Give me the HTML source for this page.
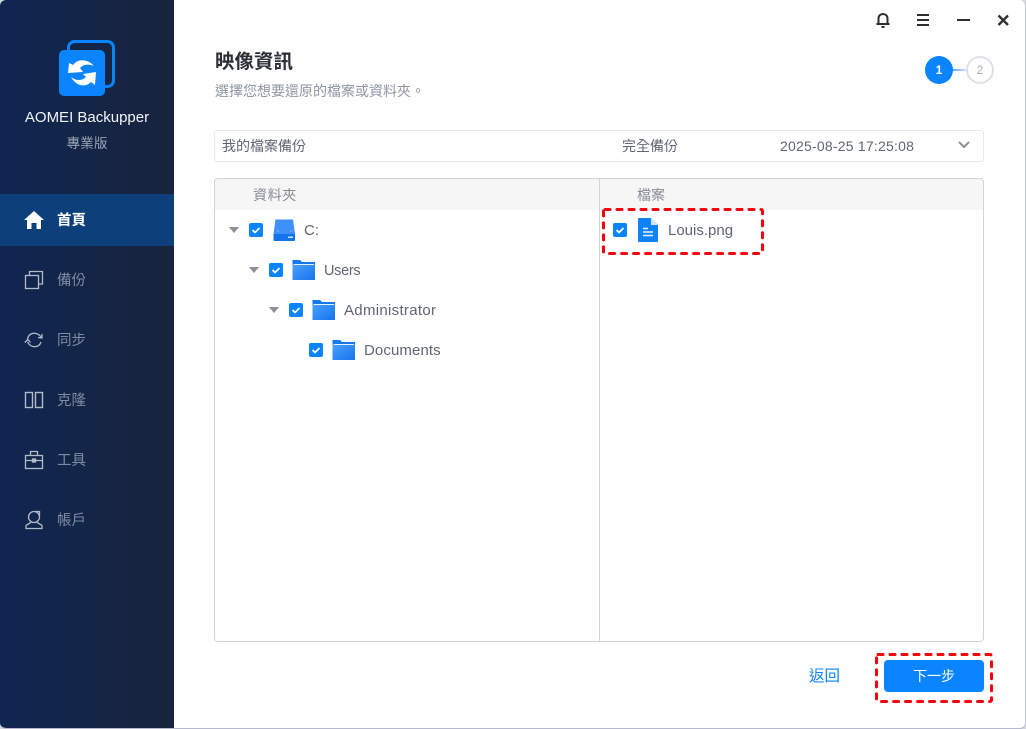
<!DOCTYPE html>
<html><head><meta charset="utf-8"><style>
*{box-sizing:border-box}
html,body{margin:0;padding:0;width:1026px;height:729px;overflow:hidden;background:#d5d6dd;font-family:"Liberation Sans","Noto Sans CJK TC",sans-serif}
.a{position:absolute;white-space:nowrap}
#win{position:absolute;left:0;top:0;width:1026px;height:729px;background:#fff;border-right:1px solid #c0c3d0;border-bottom:1px solid #b6b9cb;border-radius:6px;overflow:hidden}
#side{position:absolute;left:0;top:0;width:174px;height:729px;background:linear-gradient(90deg,#0f2651,#18243d)}
.nav{position:absolute;left:57px;font-size:14.5px;line-height:20px;color:#7f8ba0}
.t{font-size:15px;color:#5f6672;line-height:20px}
.cb{position:absolute;width:14px;height:14px;border-radius:2px;background:#0a84ff}
.cb svg{display:block}
.tri{position:absolute;width:0;height:0;border-left:5px solid transparent;border-right:5px solid transparent;border-top:6.500px solid #8a8f99}
</style></head><body>
<div id="win">
<svg width="0" height="0" style="position:absolute"><defs><linearGradient id="fg" x1="0" y1="0" x2="1" y2="1"><stop offset="0" stop-color="#49a0ff"/><stop offset="1" stop-color="#1673ec"/></linearGradient></defs></svg>
<div id="side">
<svg class="a" style="left:58px;top:39px" width="58" height="58" viewBox="0 0 58 58">
<rect x="10.500" y="2.500" width="45" height="45" rx="6" fill="none" stroke="#0a84ff" stroke-width="3"/>
<rect x="1" y="11" width="46" height="46" rx="5" fill="#0a84ff"/>
<path d="M10 34 L11 24 L15 26 C20 19 30 20 36 27 C31 25 26 25 22 29 L25 33 Z" fill="#fff"/>
<path d="M38 33 L37 46 L33 43 C27 49 18 47 13 38 C18 42 24 42 28 38 L25 35 Z" fill="#fff"/>
</svg>
<div class="a" style="left:0;width:174px;top:107px;text-align:center;font-size:15px;line-height:21px;color:#f2f4f8">AOMEI Backupper</div>
<div class="a" style="left:0;width:174px;top:133px;text-align:center;font-size:13.700px;line-height:21px;color:#9aa3b3">專業版</div>
<div class="a" style="left:0;top:194px;width:174px;height:52px;background:#0d3f7a"></div>
<svg class="a" style="left:24px;top:210px" width="20" height="19" viewBox="0 0 20 19"><path d="M10 1 L20 10 L17 10 L17 19 L12.500 19 L12.500 13 L7.500 13 L7.500 19 L3 19 L3 10 L0 10 Z" fill="#fff"/></svg>
<div class="nav" style="top:211px;color:#fff;font-weight:700">首頁</div>
<svg class="a" style="left:24px;top:270px" width="20" height="20" viewBox="0 0 20 20" fill="none" stroke="#b4bac6" stroke-width="1.300"><rect x="1.500" y="5.500" width="13" height="13"/><path d="M5.500 5 V1.500 H18.500 V14 H15"/></svg>
<div class="nav" style="top:271px">備份</div>
<svg class="a" style="left:24px;top:330px" width="20" height="20" viewBox="0 0 20 20" fill="none" stroke="#b4bac6" stroke-width="1.300"><path d="M3.500 9 C5 2 13 1.500 17 7"/><path d="M18 4 V8 L14 7.500"/><path d="M17 12 C15 18 7 18.500 3.500 12"/><path d="M0.800 12.500 L3.800 9.500 L6.500 12.500"/></svg>
<div class="nav" style="top:331px">同步</div>
<svg class="a" style="left:24px;top:390px" width="20" height="20" viewBox="0 0 20 20" fill="none" stroke="#b4bac6" stroke-width="1.400"><rect x="1.500" y="2.500" width="7" height="15"/><rect x="11.500" y="2.500" width="7" height="15"/></svg>
<div class="nav" style="top:391px">克隆</div>
<svg class="a" style="left:24px;top:450px" width="20" height="20" viewBox="0 0 20 20" fill="none" stroke="#b4bac6" stroke-width="1.300"><rect x="1.500" y="5.500" width="17" height="13"/><path d="M6.500 5 V1.500 H13.500 V5 M1.500 10.500 H18.500"/><rect x="8.500" y="9" width="3" height="3" fill="#b4bac6"/></svg>
<div class="nav" style="top:451px">工具</div>
<svg class="a" style="left:24px;top:510px" width="20" height="20" viewBox="0 0 20 20" fill="none" stroke="#b4bac6" stroke-width="1.300"><path d="M4.500 7 A5.500 5.500 0 1 1 15.500 7 A5.500 5.500 0 1 1 4.500 7 Z"/><path d="M11 1.500 H15.500 V6"/><path d="M7 12.500 L2.500 15 Q2 15.500 2 16 V18.500 H18 V16 Q18 15.500 17.500 15 L13 12.500"/></svg>
<div class="nav" style="top:511px">帳戶</div>
</div>

<svg class="a" style="left:874px;top:11px" width="18" height="18" viewBox="0 0 18 18" fill="none" stroke="#2b2f36" stroke-width="2"><path d="M2.500 13 H15.500 M4.500 13 V7.500 C4.500 1.500 13.500 1.500 13.500 7.500 V13"/><path d="M7.500 16 H10.500"/></svg>
<svg class="a" style="left:916px;top:13px" width="14" height="14" viewBox="0 0 14 14" stroke="#2b2f36" stroke-width="2"><path d="M1 2 H13 M1 7 H13 M1 12 H13"/></svg>
<svg class="a" style="left:956px;top:13px" width="15" height="14" viewBox="0 0 15 14" stroke="#2b2f36" stroke-width="2"><path d="M1 7 H14"/></svg>
<svg class="a" style="left:996px;top:13px" width="14" height="14" viewBox="0 0 14 14" stroke="#332f36" stroke-width="2.400"><path d="M2.500 2.500 L12 12 M12 2.500 L2.500 12"/></svg>

<div class="a" style="left:215px;top:50px;font-size:19.500px;line-height:24px;font-weight:700;color:#2b2f36">映像資訊</div>
<div class="a" style="left:215px;top:81px;font-size:14px;line-height:20px;color:#8e96a4">選擇您想要還原的檔案或資料夾。</div>

<div class="a" style="left:952px;top:69px;width:15px;height:2px;background:linear-gradient(90deg,#5aa8ff,#d5e6ff)"></div>
<div class="a" style="left:925px;top:56px;width:28px;height:28px;border-radius:50%;background:#0a84ff;color:#fff;font-size:12px;font-weight:700;text-align:center;line-height:28px">1</div>
<div class="a" style="left:966px;top:56px;width:28px;height:28px;border-radius:50%;border:2px solid #dfe1e7;background:#fff;color:#a9adb8;font-size:12px;text-align:center;line-height:24px">2</div>

<div class="a" style="left:214px;top:130px;width:770px;height:32px;border:1px solid #e8e9ed;border-radius:3px"></div>
<div class="a" style="left:222px;top:136px;font-size:14px;line-height:20px;color:#5f6672">我的檔案備份</div>
<div class="a" style="left:622px;top:136px;font-size:14px;line-height:20px;color:#5f6672">完全備份</div>
<div class="a" style="left:780px;top:136px;font-size:14px;line-height:20px;color:#5f6672;letter-spacing:.22px">2025-08-25 17:25:08</div>
<svg class="a" style="left:957px;top:140px" width="14" height="10" viewBox="0 0 14 10" fill="none" stroke="#8a8f99" stroke-width="2"><path d="M2 2 L7 7 L12 2"/></svg>

<div class="a" style="left:214px;top:178px;width:770px;height:464px;border:1px solid #d2d4da;border-radius:4px;overflow:hidden">
<div class="a" style="left:0;top:0;width:768px;height:31px;background:#f6f6f7"></div>
<div class="a" style="left:384px;top:0;width:1px;height:462px;background:#d2d4da"></div>
</div>
<div class="a" style="left:253px;top:185px;font-size:14px;line-height:20px;color:#868b95;letter-spacing:.6px">資料夾</div>
<div class="a" style="left:637px;top:185px;font-size:14px;line-height:20px;color:#868b95">檔案</div>

<div class="tri" style="left:229px;top:227px"></div>
<div class="cb" style="left:249px;top:223px"><svg width="14" height="14" viewBox="0 0 14 14" fill="none" stroke="#fff" stroke-width="1.700"><path d="M3.500 7 L6 9.500 L10.500 5"/></svg></div>
<svg class="a" style="left:273px;top:219px" width="23" height="23" viewBox="0 0 23 23"><path d="M2.500 0.500 H20 L22 15 H0.500 Z" fill="#3d91f8"/><path d="M0.500 15 H22 V21 Q22 22 21 22 H1.500 Q0.500 22 0.500 21 Z" fill="#1474ec"/><rect x="15" y="17.500" width="5" height="1.500" fill="#cfe4ff"/><circle cx="5" cy="12" r=".7" fill="#a8cdfd"/><circle cx="18" cy="12" r=".7" fill="#a8cdfd"/></svg>
<div class="a t" style="left:304px;top:221px">C:</div>

<div class="tri" style="left:249px;top:267px"></div>
<div class="cb" style="left:269px;top:263px"><svg width="14" height="14" viewBox="0 0 14 14" fill="none" stroke="#fff" stroke-width="1.700"><path d="M3.500 7 L6 9.500 L10.500 5"/></svg></div>
<svg class="a" style="left:292px;top:260px" width="24" height="20" viewBox="0 0 24 20"><path d="M0.500 0 H8 L10 2 H23 V6 H0.500 Z" fill="#1778ee"/><rect x="0.500" y="5" width="22.500" height="15" fill="url(#fg)"/><rect x="1.500" y="4" width="20.500" height="1" fill="#e4efff"/></svg>
<div class="a t" style="left:324px;top:261px;font-size:14.500px;letter-spacing:-.3px">Users</div>

<div class="tri" style="left:269px;top:307px"></div>
<div class="cb" style="left:289px;top:303px"><svg width="14" height="14" viewBox="0 0 14 14" fill="none" stroke="#fff" stroke-width="1.700"><path d="M3.500 7 L6 9.500 L10.500 5"/></svg></div>
<svg class="a" style="left:312px;top:300px" width="24" height="20" viewBox="0 0 24 20"><path d="M0.500 0 H8 L10 2 H23 V6 H0.500 Z" fill="#1778ee"/><rect x="0.500" y="5" width="22.500" height="15" fill="url(#fg)"/><rect x="1.500" y="4" width="20.500" height="1" fill="#e4efff"/></svg>
<div class="a t" style="left:344px;top:301px;letter-spacing:.3px">Administrator</div>

<div class="cb" style="left:309px;top:343px"><svg width="14" height="14" viewBox="0 0 14 14" fill="none" stroke="#fff" stroke-width="1.700"><path d="M3.500 7 L6 9.500 L10.500 5"/></svg></div>
<svg class="a" style="left:332px;top:340px" width="24" height="20" viewBox="0 0 24 20"><path d="M0.500 0 H8 L10 2 H23 V6 H0.500 Z" fill="#1778ee"/><rect x="0.500" y="5" width="22.500" height="15" fill="url(#fg)"/><rect x="1.500" y="4" width="20.500" height="1" fill="#e4efff"/></svg>
<div class="a t" style="left:364px;top:341px;letter-spacing:.1px">Documents</div>

<svg class="a" style="left:601px;top:207px" width="164" height="49" viewBox="0 0 164 49"><rect x="2.500" y="2.500" width="159" height="44" rx="1.500" fill="none" stroke="#f5000c" stroke-width="3" stroke-dasharray="5 7" stroke-linecap="round"/></svg>
<div class="cb" style="left:613px;top:223px"><svg width="14" height="14" viewBox="0 0 14 14" fill="none" stroke="#fff" stroke-width="1.700"><path d="M3.500 7 L6 9.500 L10.500 5"/></svg></div>
<svg class="a" style="left:638px;top:218px" width="20" height="24" viewBox="0 0 20 24"><path d="M1 0 H13 L20 7 V23 Q20 24 19 24 H1 Q0 24 0 23 V1 Q0 0 1 0 Z" fill="#0f82f5"/><path d="M13 0 L20 7 H13 Z" fill="#cfe5ff"/><path d="M5 10.500 H10 M5 14 H15 M5 17.500 H15" stroke="#e8f2ff" stroke-width="1.500"/></svg>
<div class="a t" style="left:668px;top:221px">Louis.png</div>

<div class="a" style="left:809px;top:667px;font-size:15.500px;line-height:20px;color:#0a84ff">返回</div>
<svg class="a" style="left:874px;top:652px" width="120" height="52" viewBox="0 0 120 52"><rect x="2.500" y="2.500" width="115" height="47" rx="1.500" fill="none" stroke="#f5000c" stroke-width="3" stroke-dasharray="5 7" stroke-linecap="round"/></svg>
<div class="a" style="left:884px;top:660px;width:100px;height:32px;border-radius:4px;background:#0a84ff;color:#fff;font-size:14px;line-height:32px;text-align:center">下一步</div>
</div>
</body></html>
